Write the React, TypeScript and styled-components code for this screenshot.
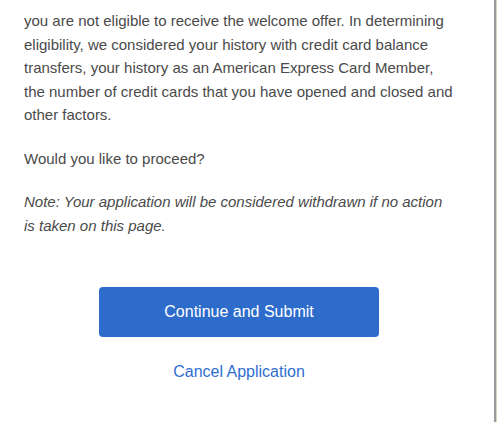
import React from "react";
import styled, { createGlobalStyle } from "styled-components";

const Global = createGlobalStyle`
  html, body { margin: 0; padding: 0; background: #fff; }
  body { font-family: "Liberation Sans", Arial, sans-serif; }
`;

const Frame = styled.div`
  display: flex;
  width: 497px;
  height: 422px;
  overflow: hidden;
`;

const Panel = styled.div`
  width: 494px;
  flex: none;
  background: #fff;
  box-sizing: border-box;
  padding: 9px 40px 0 24px;
  display: flex;
  flex-direction: column;
`;

const Edge = styled.div`
  width: 2px;
  flex: none;
  background: #9a9a9a;
`;

const Outside = styled.div`
  flex: 1;
  background: #d8d2c0;
`;

const Para = styled.p<{ $italic?: boolean; $gap: number }>`
  margin: 0 0 ${(p) => p.$gap}px 0;
  font-size: 15px;
  line-height: 23.5px;
  color: #4a4a4a;
  font-style: ${(p) => (p.$italic ? "italic" : "normal")};
`;

const Actions = styled.div`
  display: flex;
  flex-direction: column;
  align-items: center;
  margin-top: 7px;
`;

const Primary = styled.button`
  width: 280px;
  height: 50px;
  border: none;
  border-radius: 4px;
  background: #2e6ccc;
  color: #fff;
  font-family: "Liberation Sans", Arial, sans-serif;
  font-size: 16px;
  cursor: pointer;
`;

const Link = styled.a`
  margin-top: 26px;
  color: #2f6fd1;
  font-size: 16px;
  text-decoration: none;
`;

export default function App() {
  return (
    <>
      <Global />
      <Frame>
        <Panel>
          <Para $gap={20}>
            you are not eligible to receive the welcome offer. In determining
            eligibility, we considered your history with credit card balance
            transfers, your history as an American Express Card Member, the
            number of credit cards that you have opened and closed and other
            factors.
          </Para>
          <Para $gap={20}>Would you like to proceed?</Para>
          <Para $italic $gap={43}>
            Note: Your application will be considered withdrawn if no action is
            taken on this page.
          </Para>
          <Actions>
            <Primary>Continue and Submit</Primary>
            <Link href="#">Cancel Application</Link>
          </Actions>
        </Panel>
        <Edge />
        <Outside />
      </Frame>
    </>
  );
}
